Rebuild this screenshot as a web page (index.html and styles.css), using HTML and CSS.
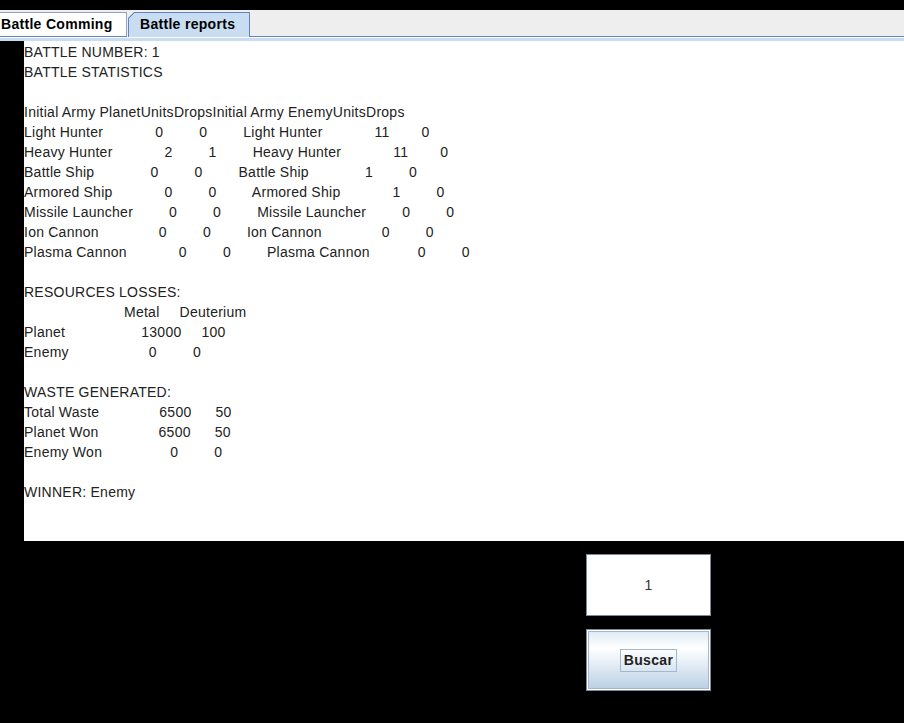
FILE: index.html
```html
<!DOCTYPE html>
<html>
<head>
<meta charset="utf-8">
<link rel="stylesheet" href="styles.css">
</head>
<body>
<div class="app">
  <div class="tabs">
    <div class="tab tab-idle">Battle Comming</div>
    <div class="tab tab-active">Battle reports</div>
    <div class="tab-rest"></div>
  </div>
  <div class="tab-strip"></div>
  <div class="main">
    <div class="report">BATTLE NUMBER: 1
BATTLE STATISTICS

Initial Army PlanetUnitsDropsInitial Army EnemyUnitsDrops
Light Hunter             0         0         Light Hunter             11        0
Heavy Hunter             2         1         Heavy Hunter             11        0
Battle Ship              0         0         Battle Ship              1         0
Armored Ship             0         0         Armored Ship             1         0
Missile Launcher         0         0         Missile Launcher         0         0
Ion Cannon               0         0         Ion Cannon               0         0
Plasma Cannon             0         0         Plasma Cannon            0         0

RESOURCES LOSSES:
                         Metal     Deuterium
Planet                   13000     100
Enemy                    0         0

WASTE GENERATED:
Total Waste               6500      50
Planet Won               6500      50
Enemy Won                 0         0

WINNER: Enemy</div>
    <div class="controls">
      <div class="field">1</div>
      <button class="btn"><span class="btn-label">Buscar</span></button>
    </div>
  </div>
</div>
</body>
</html>
```

FILE: styles.css
```css
* { box-sizing: border-box; }
html, body { margin: 0; padding: 0; }
body {
  background: #000;
  width: 904px;
  height: 723px;
  overflow: hidden;
  font-family: "Liberation Sans", Arial, sans-serif;
}
.app { padding-top: 10px; }
.tabs {
  display: flex;
  align-items: flex-end;
  height: 27px;
  background: #eeeeee;
}
.tab {
  height: 25px;
  font-size: 14px;
  font-weight: bold;
  line-height: 23px;
  letter-spacing: 0.3px;
  color: #000;
  white-space: nowrap;
}
.tab-idle {
  width: 127px;
  padding-left: 1px;
  background: #fff;
  border-top: 1px solid #8da2c5;
  border-right: 1px solid #8da2c5;
  border-bottom: 1px solid #6382bf;
}
.tab-active {
  width: 122px;
  margin-left: 1px;
  padding-left: 11px;
  border: 1px solid #6382bf;
  border-bottom: none;
  background: linear-gradient(135deg, transparent 0 4.2px, #6382bf 4.2px 5.4px, #c8ddf2 5.4px) border-box;
  clip-path: polygon(0 6px, 6px 0, 100% 0, 100% 100%, 0 100%);
}
.tab-rest {
  flex: 1;
  height: 1px;
  background: #6382bf;
}
.tab-strip {
  height: 4px;
  border-top: 1px solid #fff;
  background: #c8ddf2;
}
.main {
  display: flex;
  flex-direction: column;
}
.report {
  margin-left: 24px;
  height: 500px;
  padding-top: 1px;
  background: #fff;
  color: #222;
  font-size: 14px;
  line-height: 20px;
  letter-spacing: 0.26px;
  word-spacing: -0.15px;
  white-space: pre;
}
.controls {
  display: flex;
  flex-direction: column;
  gap: 13px;
  margin: 13px 0 0 586px;
  width: 125px;
}
.field {
  height: 62px;
  border: 1px solid #7a8a99;
  background: #fff;
  display: flex;
  align-items: center;
  justify-content: center;
  font-size: 14px;
  color: #333;
}
.btn {
  height: 62px;
  padding: 0;
  border: 1px solid #7a8a99;
  box-shadow: inset 0 0 0 1px #ffffff, inset 0 0 0 2px #a3b8cc;
  background: linear-gradient(#dde8f3 0%, #ffffff 30%, #b8cfe5 100%);
  display: flex;
  align-items: center;
  justify-content: center;
  font-family: "Liberation Sans", Arial, sans-serif;
}
.btn-label {
  border: 1px solid #a3b8cc;
  padding: 2px 3px;
  font-size: 14px;
  font-weight: bold;
  letter-spacing: 0.3px;
  color: #222;
  line-height: 17px;
}
```
